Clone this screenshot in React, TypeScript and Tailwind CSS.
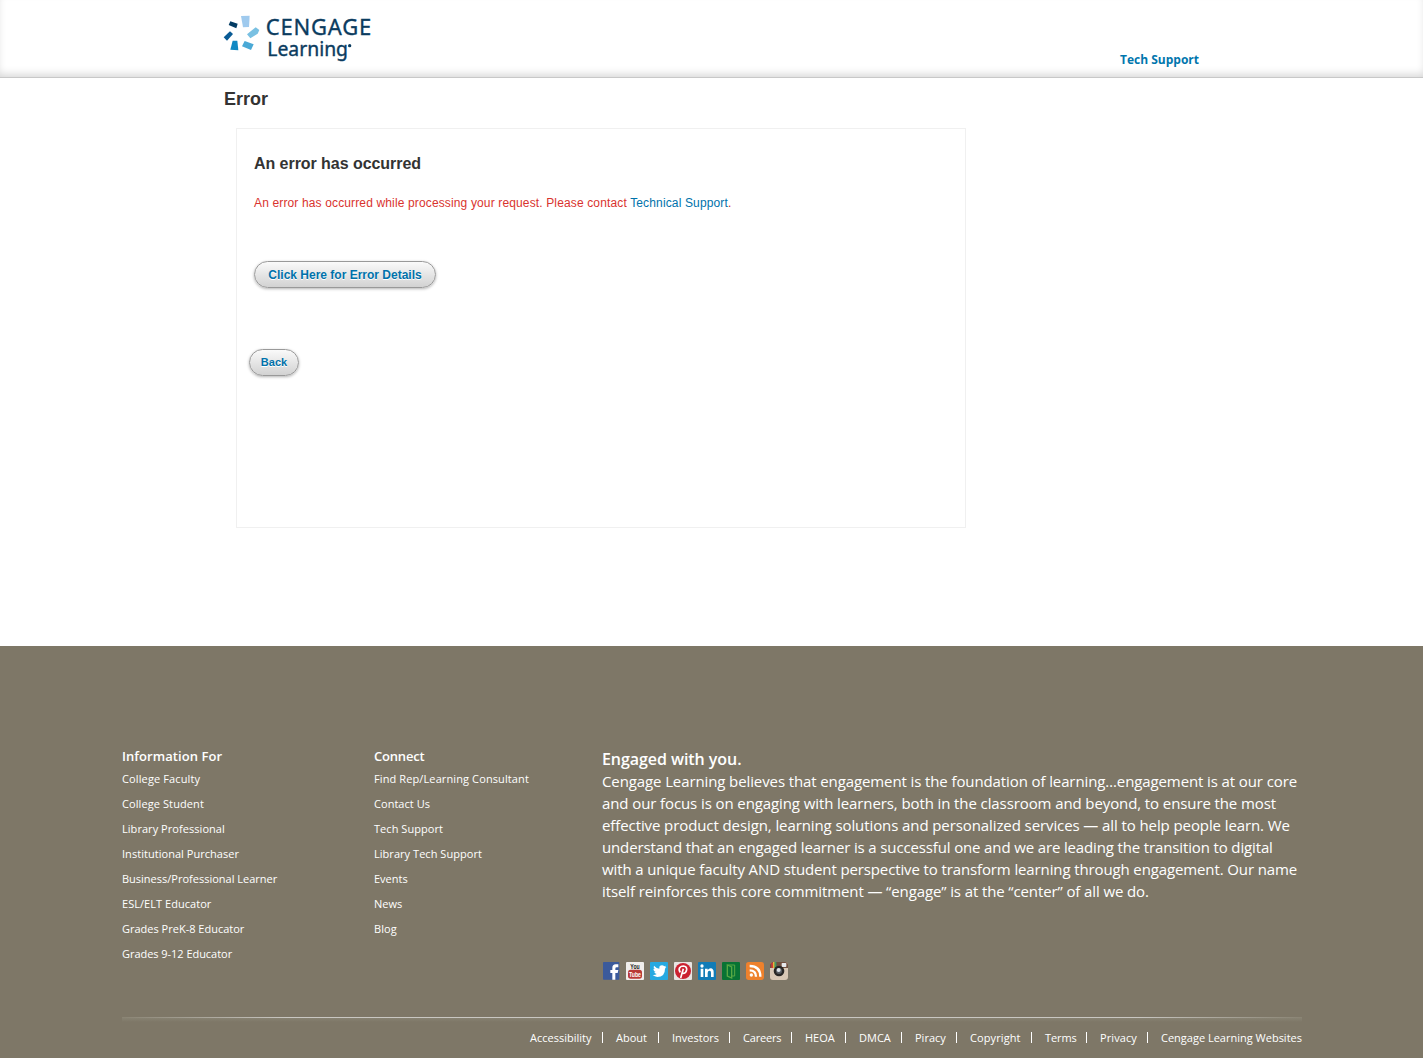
import React from "react";

const audience: [string, string][] = [
  ["College Faculty", "tracking-[0.12px]"],
  ["College Student", "tracking-[0.09px]"],
  ["Library Professional", "tracking-[0.05px]"],
  ["Institutional Purchaser", "tracking-[0.04px]"],
  ["Business/Professional Learner", "tracking-[0px]"],
  ["ESL/ELT Educator", "tracking-[0.04px]"],
  ["Grades PreK-8 Educator", "tracking-[0px]"],
  ["Grades 9-12 Educator", "tracking-[-0.04px]"],
];

const connect: [string, string][] = [
  ["Find Rep/Learning Consultant", "tracking-[0.11px]"],
  ["Contact Us", "tracking-[0.04px]"],
  ["Tech Support", "tracking-[0.05px]"],
  ["Library Tech Support", "tracking-[0.04px]"],
  ["Events", "tracking-[0px]"],
  ["News", "tracking-[0px]"],
  ["Blog", "tracking-[0.1px]"],
];

const about: [string, string][] = [
  ["Cengage Learning believes that engagement is the foundation of learning…engagement is at our core", "tracking-[-0.108px]"],
  ["and our focus is on engaging with learners, both in the classroom and beyond, to ensure the most", "tracking-[-0.1px]"],
  ["effective product design, learning solutions and personalized services — all to help people learn. We", "tracking-[-0.095px]"],
  ["understand that an engaged learner is a successful one and we are leading the transition to digital", "tracking-[-0.14px]"],
  ["with a unique faculty AND student perspective to transform learning through engagement. Our name", "tracking-[-0.122px]"],
  ["itself reinforces this core commitment — “engage” is at the “center” of all we do.", "tracking-[-0.11px]"],
];

const legal: [string, string][] = [
  ["Accessibility", "w-[62px]"],
  ["About", "w-[32px]"],
  ["Investors", "w-[47px]"],
  ["Careers", "w-[38px] tracking-[-0.2px]"],
  ["HEOA", "w-[30px]"],
  ["DMCA", "w-[32px]"],
  ["Piracy", "w-[31px]"],
  ["Copyright", "w-[51px] tracking-[0.1px]"],
  ["Terms", "w-[31px] tracking-[-0.1px]"],
  ["Privacy", "w-[37px] tracking-[0.1px]"],
  ["Cengage Learning Websites", "w-[141px]"],
];

function Logo() {
  return (
    <svg className="block h-[50px] w-[150px] overflow-visible" viewBox="24 27 450 150" role="img" aria-label="Cengage Learning">
      <path d="M78 33L104 32L102 66L84 67Z" fill="#9fcaee" />
      <path d="M96 88L122 67L133 75L128 86L106 100Z" fill="#79c0e2" />
      <path d="M81 124L89 108L116 118L108 135Z" fill="#4aa9d6" />
      <path d="M46 134L53 107L67 107L70 136Z" fill="#0f88c3" />
      <path d="M26 97L45 79L54 87L36 107Z" fill="#0a5b95" />
      <path d="M41 60L46 49L68 56L64 70Z" fill="#033b63" />
      <g fill="#0b3c5f" fontFamily="'Noto Sans', 'Open Sans', sans-serif" stroke="#0b3c5f">
        <text x="152" y="90" fontSize="66" textLength="317" lengthAdjust="spacing" strokeWidth="1">CENGAGE</text>
        <text x="157" y="152" fontSize="61" textLength="242" lengthAdjust="spacingAndGlyphs" strokeWidth="1.2">Learning</text>
      </g>
      <circle cx="404" cy="122" r="5" fill="#0b3c5f" />
    </svg>
  );
}

const tile = "block h-[18px] w-[18px] overflow-visible";

function Social() {
  return (
    <div className="flex gap-[6px]">
      <svg className={tile} viewBox="0 0 54 54">
        <rect x="3" width="49" height="53" rx="2" fill="#3b5a9b" />
        <path d="M31 53V33H25V24H31V18Q31 7 41 7H49V16H44Q40 16 40 20V24H49L47 33H40V53Z" fill="#fff" />
      </svg>
      <svg className={tile} viewBox="0 0 54 54">
        <rect width="54" height="54" rx="3" fill="#f0eeec" />
        <rect x="6" y="23" width="42" height="27" rx="8" fill="#b93a36" />
        <g fontFamily="'Liberation Sans', sans-serif" fontWeight="700">
          <text x="13" y="20" fontSize="23" textLength="28" lengthAdjust="spacingAndGlyphs" fill="#222">You</text>
          <text x="9" y="45" fontSize="23" textLength="36" lengthAdjust="spacingAndGlyphs" fill="#fff">Tube</text>
        </g>
      </svg>
      <svg className={tile} viewBox="0 0 54 54">
        <rect width="54" height="54" rx="3" fill="#27a9e1" />
        <path d="M8 39Q16 40 20 36Q14 35 13 30H17Q10 27 10 20L14 21Q9 16 12 11Q19 19 28 20Q27 10 36 10Q40 10 43 13L48 11L45 16L49 15L45 20Q45 45 22 45Q14 44 8 39Z" fill="#fff" />
      </svg>
      <svg className={tile} viewBox="0 0 54 54">
        <rect width="54" height="54" rx="3" fill="#e8e4e2" />
        <circle cx="27" cy="27" r="24" fill="#cb2130" />
        <path d="M19 31Q13 24 17 17Q21 12 28 12Q39 13 38 23Q36 34 29 34Q25 34 24 31M28 20L20 48" fill="none" stroke="#fff" strokeWidth="5" />
      </svg>
      <svg className={tile} viewBox="0 0 54 54">
        <rect width="54" height="54" rx="3" fill="#127cb7" />
        <path d="M8 20H16V45H8ZM21 20H29V24Q33 19 38 19Q47 20 47 31V45H39V32Q39 26 35 26Q29 26 29 33V45H21Z" fill="#fff" />
        <circle cx="12" cy="12" r="5" fill="#fff" />
      </svg>
      <svg className={tile} viewBox="0 0 54 54">
        <rect width="54" height="54" rx="3" fill="#087334" />
        <path d="M16 9H38V42H29" fill="none" stroke="#58a944" strokeWidth="3" />
        <path d="M16 9L29 15V48L16 42Z" fill="#087334" stroke="#58a944" strokeWidth="4" />
      </svg>
      <svg className={tile} viewBox="0 0 54 54">
        <rect width="54" height="54" rx="8" fill="#ee812c" />
        <circle cx="16" cy="39" r="5" fill="#fff" />
        <path d="M11 25Q30 25 30 44M11 12Q43 12 43 44" fill="none" stroke="#fff" strokeWidth="7" />
      </svg>
      <svg className={tile} viewBox="0 0 54 54">
        <rect width="54" height="54" rx="9" fill="#d9c8b5" />
        <path d="M0 18V9Q0 0 9 0H45Q54 0 54 9V18Z" fill="#70503f" />
        <path d="M4 2H9V18H4Z" fill="#d33c37" />
        <path d="M9 0H14V18H9Z" fill="#e1b93b" />
        <path d="M14 0H19V18H14Z" fill="#3d9d6a" />
        <rect x="35" y="3" width="14" height="12" rx="2" fill="#e6e8eb" />
        <circle cx="27" cy="27" r="16" fill="#292725" />
        <circle cx="27" cy="27" r="9" fill="#575b60" />
        <circle cx="26" cy="24" r="6" fill="#dde3e8" />
      </svg>
    </div>
  );
}

const pill =
  "flex h-[27px] items-center justify-center rounded-full border border-[#999] bg-linear-to-b from-[#fafafa] to-[#d2d2d2] font-bold text-[#0072ab] shadow-[0_1px_3px_rgba(0,0,0,0.3)] [text-shadow:0_1px_0_#fff] whitespace-nowrap";

export default function App() {
  return (
    <div className="flex h-[1058px] w-full flex-col overflow-hidden bg-white font-['Liberation_Sans',Arial,sans-serif] text-[#333]">
      <header className="h-[78px] border-b border-[#c8c8c8] shadow-[inset_0_-5px_10px_-3px_rgba(0,0,0,0.18)]">
        <div className="ml-[223px] flex w-[976px] justify-between pt-[14px]">
          <Logo />
          <a className="mt-[37px] font-['Open_Sans',sans-serif] text-[12px] leading-[17px] font-bold text-[#0076ad]">Tech Support</a>
        </div>
      </header>

      <main className="h-[568px] shrink-0 pl-[224px]">
        <h1 className="pt-[10px] text-[18px] leading-[22px] font-bold">Error</h1>
        <section className="mt-[18px] ml-[12px] h-[400px] w-[730px] border border-[#f0f0f0] pl-[17px]">
          <h2 className="pt-[25px] text-[16px] leading-[20px] font-bold tracking-[-0.05px]">An error has occurred</h2>
          <p className="mt-[21px] text-[12px] leading-[16px] tracking-[0.14px] whitespace-nowrap text-[#d9332e]">
            An error has occurred while processing your request. Please contact <a className="text-[#0072ab]">Technical Support</a>.
          </p>
          <button className={`${pill} mt-[50px] w-[182px] text-[12px]`}>Click Here for Error Details</button>
          <button className={`${pill} mt-[61px] -ml-[5px] w-[50px] text-[11px]`}>Back</button>
        </section>
      </main>

      <footer className="flex-1 bg-[#7e7767] pl-[122px] font-['Open_Sans',sans-serif] text-white">
        <div className="flex h-[371px] pt-[101px]">
          <div className="w-[252px]">
            <h3 className="text-[13px] leading-[19px] font-semibold tracking-[0.06px]">Information For</h3>
            <ul className="text-[11px] leading-[25px]">
              {audience.map(([label, tracking]) => (
                <li key={label} className={tracking}>{label}</li>
              ))}
            </ul>
          </div>
          <div className="w-[228px]">
            <h3 className="text-[13px] leading-[19px] font-semibold tracking-[-0.2px]">Connect</h3>
            <ul className="text-[11px] leading-[25px]">
              {connect.map(([label, tracking]) => (
                <li key={label} className={tracking}>{label}</li>
              ))}
            </ul>
          </div>
          <div className="flex w-[720px] flex-col">
            <h3 className="pt-[1px] text-[16px] leading-[22px] font-semibold tracking-[-0.06px]">Engaged with you.</h3>
            <div className="text-[15px] leading-[22px] whitespace-nowrap">
              {about.map(([line, tracking]) => (
                <p key={line} className={tracking}>{line}</p>
              ))}
            </div>
            <div className="mt-[60px]">
              <Social />
            </div>
          </div>
        </div>
        <div className="h-[12px] w-[1180px]">
          <div className="h-px bg-[linear-gradient(to_right,#8a8474_0%,#c9c7c2_14%,#c9c7c2_86%,#8a8474_100%)]" />
          <div className="h-[4px] bg-linear-to-b from-[#878272] to-[#7e7767]" />
        </div>
        <nav className="flex w-[1180px] justify-end text-[11px] leading-[17px] whitespace-nowrap">
          {legal.map(([label, w], i) => (
            <React.Fragment key={label}>
              {i > 0 && <span className="mt-[3px] mr-[13px] ml-[10px] h-[11px] w-px bg-white" />}
              <a className={w}>{label}</a>
            </React.Fragment>
          ))}
        </nav>
      </footer>
    </div>
  );
}
